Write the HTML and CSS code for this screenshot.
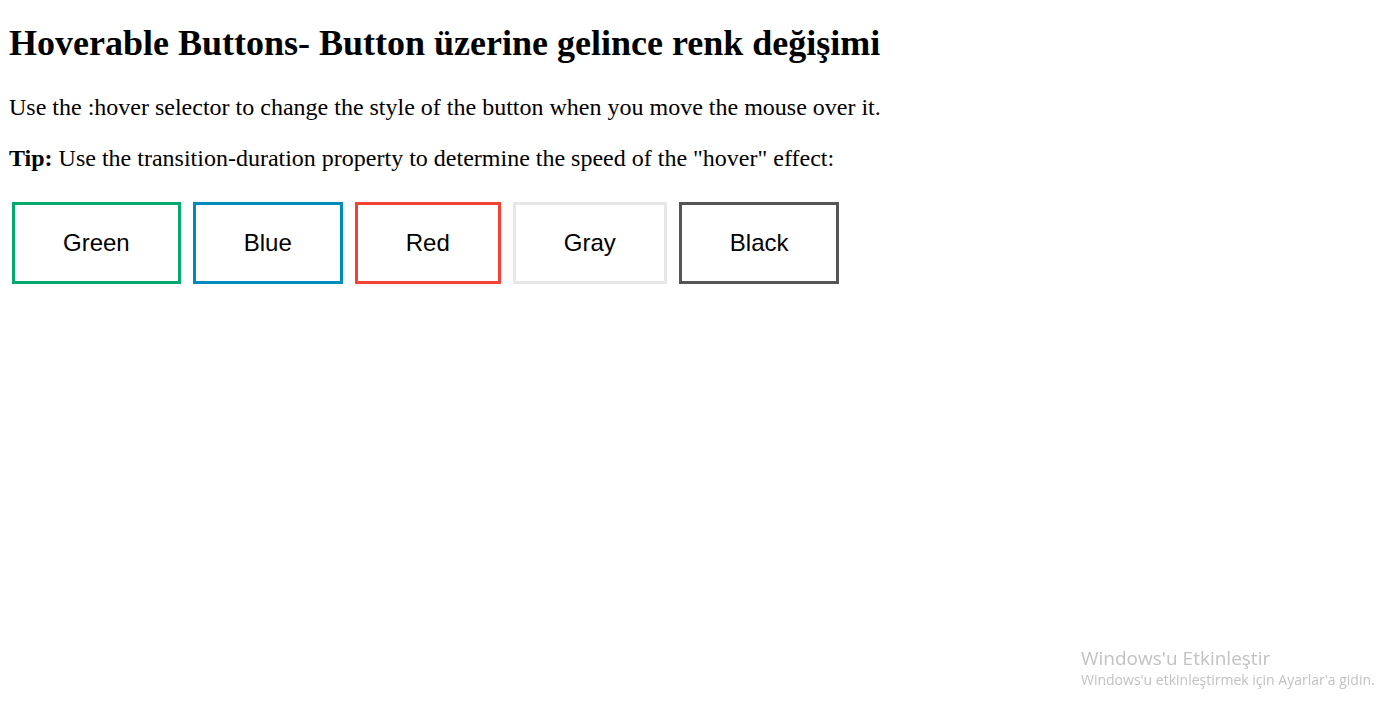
FILE: index.html
```html
<!DOCTYPE html>
<html lang="tr">
<head>
<meta charset="utf-8">
<title>Hoverable Buttons</title>
<link rel="stylesheet" href="styles.css">
</head>
<body>
<h2 class="title">Hoverable Buttons- Button üzerine gelince renk değişimi</h2>
<p class="text">Use the :hover selector to change the style of the button when you move the mouse over it.</p>
<p class="text"><b>Tip:</b> Use the transition-duration property to determine the speed of the "hover" effect:</p>
<div class="buttons">
  <button class="button button1">Green</button>
  <button class="button button2">Blue</button>
  <button class="button button3">Red</button>
  <button class="button button4">Gray</button>
  <button class="button button5">Black</button>
</div>
<div class="watermark">
  <div class="wm-title">Windows'u Etkinleştir</div>
  <div class="wm-sub">Windows'u etkinleştirmek için Ayarlar'a gidin.</div>
</div>
</body>
</html>
```
FILE: styles.css
```css
html, body {
  margin: 0;
  padding: 0;
}
body {
  padding: 22px 9px 0 9px;
  font-family: "Liberation Serif", "Times New Roman", serif;
  color: #000;
  background: #fff;
  min-height: 100vh;
  box-sizing: border-box;
}
.title {
  font-size: 36px;
  font-weight: bold;
  margin: 0 0 30px 0;
}
.text {
  font-size: 24px;
  margin: 0 0 24px 0;
}
.buttons {
  display: flex;
  gap: 12px;
  padding-left: 3px;
  margin-top: 30px;
}
.button {
  background-color: #fff;
  color: #000;
  padding: 24px 48px;
  font-family: "Liberation Sans", Arial, sans-serif;
  font-size: 24px;
  line-height: 27.6px;
  text-align: center;
  cursor: pointer;
  border: 3px solid #04AA6D;
  margin: 0;
  transition-duration: 0.4s;
}
.button1 { border-color: #04AA6D; }
.button2 { border-color: #008CBA; }
.button3 { border-color: #f44336; }
.button4 { border-color: #e7e7e7; }
.button5 { border-color: #555555; }
.button1:hover { background-color: #04AA6D; color: #fff; }
.button2:hover { background-color: #008CBA; color: #fff; }
.button3:hover { background-color: #f44336; color: #fff; }
.button4:hover { background-color: #e7e7e7; }
.button5:hover { background-color: #555555; color: #fff; }
.watermark {
  position: fixed;
  left: 1081px;
  top: 646px;
  font-family: "Open Sans", "Noto Sans", sans-serif;
  color: #c2c2c2;
}
.wm-title {
  font-size: 19px;
  line-height: 24px;
}
.wm-sub {
  font-size: 14px;
  line-height: 19px;
}
```
